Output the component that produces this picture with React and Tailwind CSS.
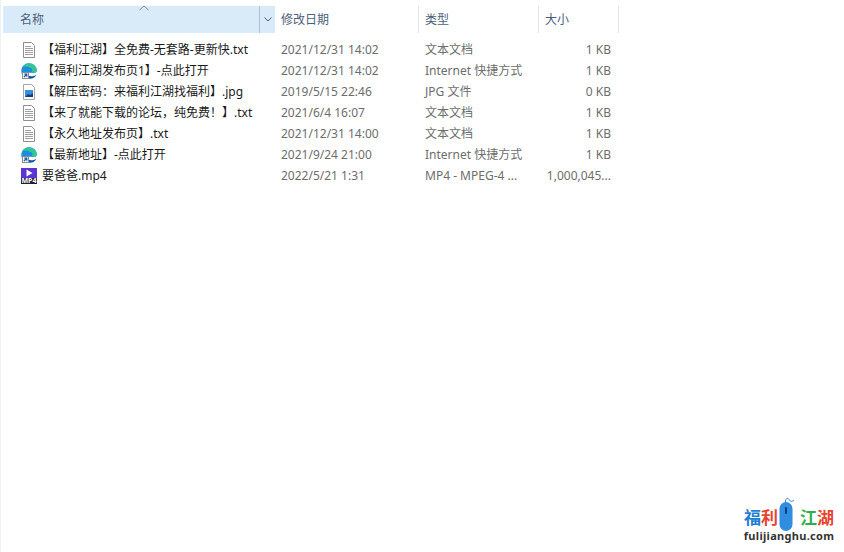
const FONT = "font-['Noto_Sans','Noto_Sans_CJK_SC',sans-serif]";

const files = [
  { icon: "txt", name: "【福利江湖】全免费-无套路-更新快.txt", date: "2021/12/31 14:02", type: "文本文档", size: "1 KB" },
  { icon: "edge", name: "【福利江湖发布页1】-点此打开", date: "2021/12/31 14:02", type: "Internet 快捷方式", size: "1 KB" },
  { icon: "jpg", name: "【解压密码：来福利江湖找福利】.jpg", date: "2019/5/15 22:46", type: "JPG 文件", size: "0 KB" },
  { icon: "txt", name: "【来了就能下载的论坛，纯免费！】.txt", date: "2021/6/4 16:07", type: "文本文档", size: "1 KB" },
  { icon: "txt", name: "【永久地址发布页】.txt", date: "2021/12/31 14:00", type: "文本文档", size: "1 KB" },
  { icon: "edge", name: "【最新地址】-点此打开", date: "2021/9/24 21:00", type: "Internet 快捷方式", size: "1 KB" },
  { icon: "mp4", name: "要爸爸.mp4", date: "2022/5/21 1:31", type: "MP4 - MPEG-4 ...", size: "1,000,045..." },
];

function TxtIcon() {
  return (
    <svg width="16" height="16" viewBox="0 0 16 16">
      <path d="M2.500.5h8l3 3v12h-11z" fill="#fff" stroke="#8f8f8f" />
      <path d="M4 4.500h6M4 6.500h8M4 8.500h8M4 10.500h8M4 12.500h8" stroke="#a0a0a0" />
    </svg>
  );
}

function JpgIcon() {
  return (
    <svg width="16" height="16" viewBox="0 0 16 16">
      <path d="M2.500.5h8l3 3v12h-11z" fill="#fff" stroke="#a6a6a6" />
      <rect x="4" y="6" width="8" height="7" fill="#3a8fdc" />
      <path d="M4 13l3-3 2 1 3-2v4z" fill="#0f3f86" />
    </svg>
  );
}

function EdgeIcon() {
  return (
    <svg width="16" height="16" viewBox="0 0 16 16">
      {/* blue body with a small notch on the right, teal cap on top */}
      <path d="M.3 8C.3 3.500 3.800.2 8 .2s7.800 3.300 7.800 7c0 1.800-1.300 2.800-3 2.800-1.500 0-4-.2-4.800-.2C6 9.800 5 14 8.500 15.800 3.500 16 .3 12.500.3 8z" fill="#1b8fdc" />
      <path d="M1.500 4C3 1.500 5.500.2 8 .2c4.300 0 7.800 3.300 7.800 7 0 1.800-1.300 2.800-3 2.800-1 0-1.800-.2-2.300-.5 1.200-1 1.200-3.200-.5-4.500C7.500 3.600 4 3 1.500 4z" fill="#35c39a" />
      <path d="M8.500 15.800c-2-.8-2.800-2.300-2.300-3.800 1.500 1.300 5.500 2 9.200-.3-1.200 2.500-3.700 4.300-6.900 4.100z" fill="#0c5aa8" />
      <rect x="1.500" y="9.500" width="6" height="6" fill="#f4f4f4" stroke="#8c8c8c" strokeWidth="1" />
      <path d="M3 14l2.500-2.500M3.300 11.200h2.500v2.500" fill="none" stroke="#1d5fb0" strokeWidth="1.200" />
    </svg>
  );
}

function Mp4Icon() {
  return (
    <svg width="16" height="16" viewBox="0 0 16 16">
      <rect width="16" height="10" fill="#5b35d5" />
      <path d="M5.500 1.500l6 3.500-6 3.500z" fill="#fff" />
      <rect y="10" width="16" height="6" fill="#22202c" />
      <text x="0.5" y="15.300" fontSize="6.500" fontWeight="700" fill="#fff" textLength="15" lengthAdjust="spacingAndGlyphs">MP4</text>
    </svg>
  );
}

const icons = { txt: TxtIcon, edge: EdgeIcon, jpg: JpgIcon, mp4: Mp4Icon };

function Row({ file }) {
  const Icon = icons[file.icon];
  return (
    <div className="flex h-[21px] items-center text-[12px] leading-[21px]">
      <div className="flex w-[278px] shrink-0 items-center pl-[18px]">
        <span className="flex w-[16px] shrink-0"><Icon /></span>
        <span className="ml-[5px] whitespace-nowrap text-[#1a1a1a]">{file.name}</span>
      </div>
      <div className="w-[144px] shrink-0 whitespace-nowrap text-[#6d6d6d]">{file.date}</div>
      <div className="w-[120px] shrink-0 whitespace-nowrap text-[#6d6d6d]">{file.type}</div>
      <div className="w-[66px] shrink-0 whitespace-nowrap text-right text-[#6d6d6d]">{file.size}</div>
    </div>
  );
}

function Header() {
  return (
    <div className="flex h-[27px] items-stretch text-[12px] text-[#4c607a]">
      <div className="relative flex w-[272px] shrink-0 items-center bg-[#d9ebf9] pl-[17px]">
        名称
        <svg className="absolute left-[136px] top-[-1px]" width="10" height="6" viewBox="0 0 10 6">
          <path d="M.5 5l4.500-4 4.500 4" fill="none" stroke="#8a8a8a" />
        </svg>
        <div className="absolute bottom-0 right-0 top-0 flex w-[16px] items-center justify-center border-l border-[#a9c4da]">
          <svg width="8" height="5" viewBox="0 0 8 5">
            <path d="M.5.500l3.500 3.500 3.500-3.500" fill="none" stroke="#4c607a" />
          </svg>
        </div>
      </div>
      <div className="flex w-[144px] shrink-0 items-center border-r border-[#e5e5e5] pl-[6px]">修改日期</div>
      <div className="flex w-[120px] shrink-0 items-center border-r border-[#e5e5e5] pl-[6px]">类型</div>
      <div className="flex w-[80px] shrink-0 items-center border-r border-[#e5e5e5] pl-[6px]">大小</div>
    </div>
  );
}

export default function App() {
  return (
    <div className={`relative h-[552px] w-[844px] overflow-hidden bg-white ${FONT}`}>
      <div className="h-full border-l border-[#f0f0f0] pl-[2px] pt-[6px]">
        <Header />
        <div className="mt-[6px]">
          {files.map((f) => <Row key={f.name} file={f} />)}
        </div>
      </div>

      {/* watermark, sits over the page */}
      <div className="absolute left-[744px] top-[497px] flex w-[90px] flex-col items-center">
        <div className="flex h-[34px] items-end text-[17px] font-bold leading-[22px]">
          <span className="pb-[2px] text-[#1f7fd6]">福</span>
          <span className="pb-[2px] text-[#e8432e]">利</span>
          <svg className="ml-[1px] mr-[5px]" width="16" height="34" viewBox="0 0 16 34">
            <path d="M6.500 6C6 1 9 .5 10 2.500S13 5 15 3" fill="none" stroke="#2f7fd0" strokeWidth="1" />
            <rect x="0.500" y="5" width="13" height="29" rx="6.500" fill="#2f8ee0" />
            <rect x="6" y="10" width="2" height="7" rx="1" fill="#0c3f80" />
          </svg>
          <span className="pb-[2px] text-[#2fae4e]">江</span>
          <span className="pb-[2px] text-[#e8432e]">湖</span>
        </div>
        <div className="mt-[-1px] whitespace-nowrap text-[11px] font-bold leading-[12px] tracking-[0.3px] text-[#333]">fulijianghu.com</div>
      </div>
    </div>
  );
}
